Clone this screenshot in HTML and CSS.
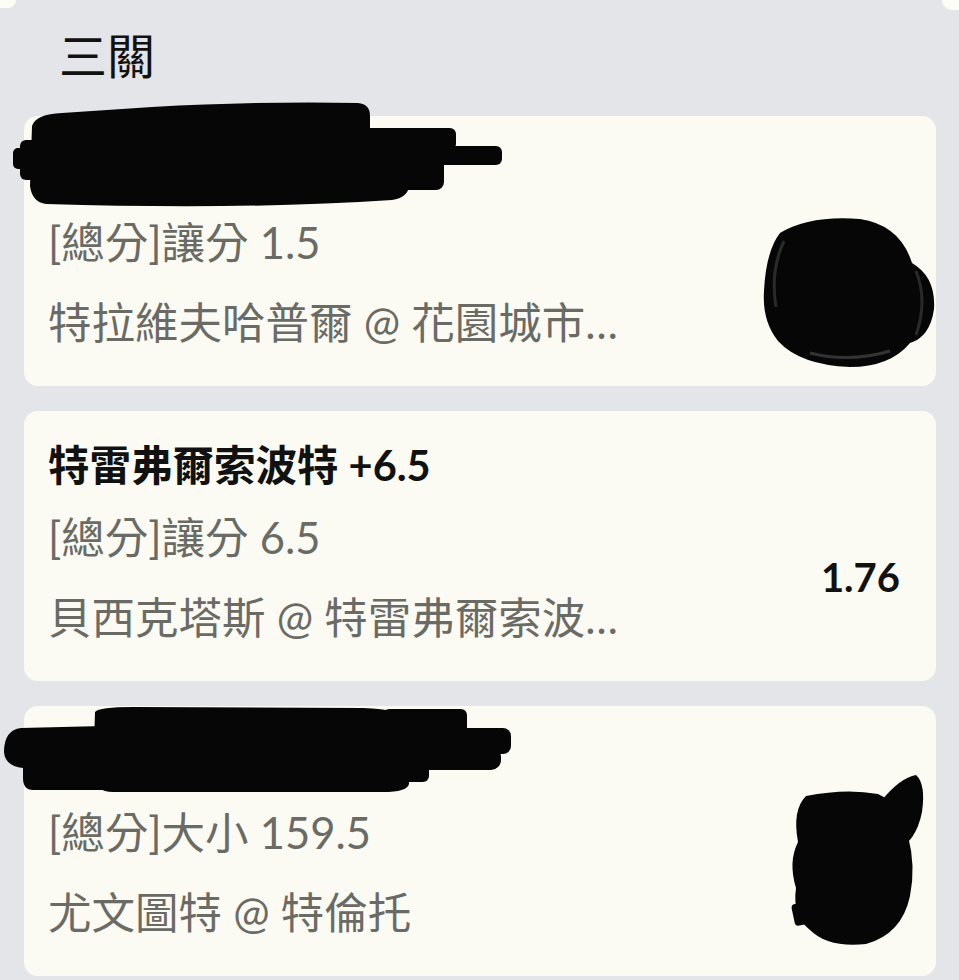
FILE: index.html
```html
<!DOCTYPE html>
<html lang="zh-Hant">
<head>
  <meta charset="UTF-8">
  <title>三關</title>
  <link rel="stylesheet" href="styles.css">
</head>
<body>
  <div class="peek">
    <div class="peek-left"></div>
    <div class="peek-right"></div>
  </div>

  <h2 class="section-title">三關</h2>

  <div class="list">
    <div class="card">
      <div class="card-title">&nbsp;</div>
      <div class="card-body">
        <div class="details">
          <div class="line">[總分]讓分 1.5</div>
          <div class="line">特拉維夫哈普爾 @ 花園城市巴勒斯坦</div>
        </div>
        <div class="odds"></div>
      </div>
      <svg class="mark mark-title1" width="492" height="108" viewBox="0 0 492 108">
        <rect x="1" y="46" width="34" height="21" rx="5"/>
        <path d="M20 24 Q24 12 50 11 L140 5 Q250 -1 346 1 Q358 2 358 14 L358 27 L392 28 Q399 30 399 44 L398 82 Q396 96 380 98 Q230 108 34 102 Q20 100 18 84 Z"/>
        <rect x="352" y="26" width="92" height="22" rx="6"/>
        <rect x="356" y="40" width="76" height="48" rx="8"/>
        <rect x="420" y="44" width="70" height="19" rx="6"/>
        <rect x="8" y="38" width="30" height="40" rx="6"/>
      </svg>
      <svg class="mark mark-odds1" width="200" height="165" viewBox="0 0 200 165">
        <path d="M40 22 Q70 4 120 8 Q160 14 172 52 Q196 66 194 98 Q190 126 170 132 Q150 156 110 156 Q60 154 38 130 Q22 110 24 80 Q26 40 40 22 Z"/>
        <path d="M44 30 Q30 60 36 96" fill="none" stroke="#2a2a2a" stroke-width="3"/>
        <path d="M176 60 Q188 90 176 124" fill="none" stroke="#2a2a2a" stroke-width="3"/>
        <path d="M70 142 Q110 152 150 140" fill="none" stroke="#333" stroke-width="3"/>
      </svg>
    </div>

    <div class="card">
      <div class="card-title">特雷弗爾索波特 +6.5</div>
      <div class="card-body">
        <div class="details">
          <div class="line">[總分]讓分 6.5</div>
          <div class="line">貝西克塔斯 @ 特雷弗爾索波特</div>
        </div>
        <div class="odds">1.76</div>
      </div>
    </div>

    <div class="card">
      <div class="card-title">&nbsp;</div>
      <div class="card-body">
        <div class="details">
          <div class="line">[總分]大小 159.5</div>
          <div class="line">尤文圖特 @ 特倫托</div>
        </div>
        <div class="odds"></div>
      </div>
      <svg class="mark mark-title3" width="515" height="90" viewBox="0 0 515 90">
        <path d="M92 6 Q96 1 130 1 L360 2 Q400 3 404 14 L406 78 Q404 86 380 86 L110 86 Q92 86 90 70 Z"/>
        <path d="M18 22 L100 20 L102 84 L30 84 Q20 84 20 72 L20 62 Q2 60 1 46 Q1 24 18 22 Z"/>
        <rect x="380" y="3" width="84" height="28" rx="6"/>
        <rect x="386" y="22" width="122" height="26" rx="8"/>
        <rect x="400" y="40" width="98" height="24" rx="10"/>
        <rect x="386" y="46" width="40" height="30" rx="6"/>
      </svg>
      <svg class="mark mark-odds3" width="165" height="190" viewBox="0 0 165 190">
        <path d="M40 30 Q80 22 112 28 Q138 40 142 70 Q150 100 144 130 Q136 168 100 178 Q62 182 44 164 Q26 150 30 122 Q22 96 32 76 Q26 44 40 30 Z"/>
        <path d="M116 34 Q134 12 150 9 Q160 18 156 46 Q150 76 130 84 L114 70 Z"/>
        <rect x="27" y="137" width="16" height="22" rx="4" transform="rotate(-12 35 148)"/>
      </svg>
    </div>
  </div>
</body>
</html>
```

FILE: styles.css
```css
body {
  margin: 0;
  font-family: Lato, "Noto Sans CJK TC", sans-serif;
  background-color: #e4e5e9;
  width: 959px;
  height: 980px;
  overflow: hidden;
}
.peek {
  display: flex;
  justify-content: space-between;
  height: 10px;
}
.peek-left {
  width: 16px;
  height: 8px;
  background: #fdfdf8;
  border-bottom-right-radius: 10px;
}
.peek-right {
  width: 17px;
  height: 10px;
  background: #fdfdf8;
  border-bottom-left-radius: 12px;
}
.section-title {
  margin: 14px 0 28px 0;
  padding-left: 59px;
  font-size: 48px;
  font-weight: normal;
  line-height: 64px;
  color: #111;
}
.list {
  display: flex;
  flex-direction: column;
  gap: 25px;
  padding: 0 23px 0 24px;
}
.card {
  position: relative;
  background: #fbfbf4;
  border-radius: 14px;
  padding: 30px 36px 16px 24px;
  height: 270px;
  box-sizing: border-box;
}
.card-title {
  font-size: 41.5px;
  font-weight: bold;
  line-height: 48px;
  color: #111;
}
.card-body {
  display: flex;
  align-items: center;
  padding-top: 8px;
}
.details {
  flex: 1;
  min-width: 0;
}
.line {
  font-size: 43.5px;
  line-height: 80px;
  color: #6b6b66;
  white-space: nowrap;
  overflow: hidden;
  text-overflow: ellipsis;
}
.odds {
  width: 277px;
  text-align: right;
  font-size: 40px;
  font-weight: bold;
  color: #111;
}
.mark {
  position: absolute;
  fill: #060606;
}
.mark-title1 { left: -12px; top: -14px; }
.mark-odds1 { left: 716px; top: 95px; }
.mark-title3 { left: -21px; top: 0; }
.mark-odds3 { left: 742px; top: 60px; }
```
